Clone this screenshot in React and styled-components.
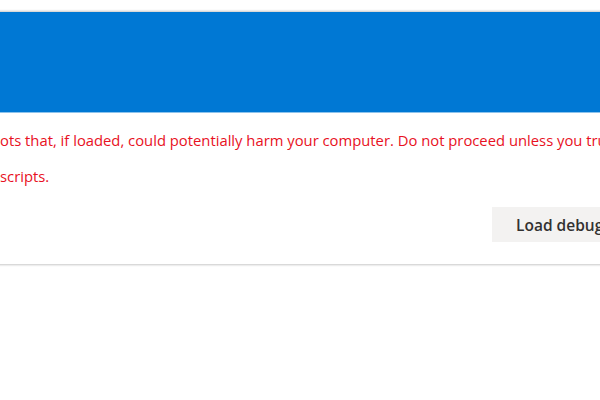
import React from 'react';
import styled, { createGlobalStyle } from 'styled-components';

const Global = createGlobalStyle`
  html, body {
    margin: 0;
    padding: 0;
    background: #ffffff;
    overflow: hidden;
  }
  body {
    width: 600px;
    height: 400px;
    font-family: "Open Sans", "Noto Sans", sans-serif;
  }
`;

const Page = styled.div`
  width: 600px;
  height: 400px;
  overflow: hidden;
  padding-top: 12px;
  box-sizing: border-box;
`;

const Dialog = styled.div`
  width: 1100px;
  margin-left: -20px;
  background: #ffffff;
  box-shadow: 0 0 2px 1px rgba(0, 0, 0, 0.22);
`;

const Header = styled.div`
  height: 100px;
  background: #0078d4;
  border-bottom: 1px solid #8dc3ec;
`;

const Body = styled.div`
  padding: 9px 0 22px 20px;
`;

const Message = styled.p`
  margin: 0;
  color: #e81123;
  font-size: 14.8px;
  line-height: 36px;
  white-space: nowrap;
`;

const Footer = styled.div`
  display: flex;
  padding-top: 13px;
  padding-left: 492px;
`;

const Button = styled.button`
  height: 35px;
  padding: 0 24px;
  border: none;
  background: #f3f2f1;
  color: #323130;
  font-family: inherit;
  font-size: 15.5px;
  font-weight: 600;
  white-space: nowrap;
`;

export default function App() {
  return (
    <Page>
      <Global />
      <Dialog>
        <Header />
        <Body>
          <Message>
            ots that, if loaded, could potentially harm your computer. Do not proceed unless you trust the source of these
          </Message>
          <Message>scripts.</Message>
          <Footer>
            <Button>Load debug scripts</Button>
          </Footer>
        </Body>
      </Dialog>
    </Page>
  );
}
